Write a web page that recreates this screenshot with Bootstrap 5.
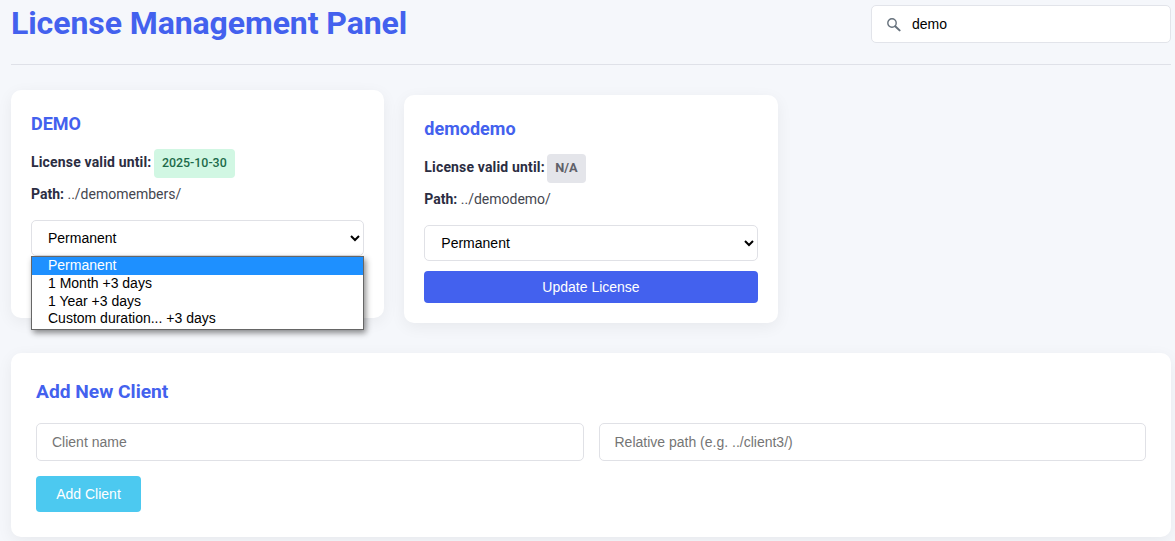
<!DOCTYPE html>
<html lang="en">
<head>
<meta charset="utf-8">
<title>License Management Panel</title>
<link rel="stylesheet" href="https://cdn.jsdelivr.net/npm/bootstrap@5.3.0/dist/css/bootstrap.min.css">
<style>
body{background:#f5f7fb;font-family:Roboto,sans-serif;color:#2b2d42;padding:0 4px 0 11px;overflow:hidden;height:541px}
.top-bar{height:43px;margin-bottom:21px}
.page-title{color:#4361ee;font-size:32px;font-weight:700;line-height:38px;margin:4px 0 0;letter-spacing:-.08px}
.search-box{width:300px;height:38px;margin-top:5px;background:#fff;border:1px solid #e2e4ea;border-radius:5px;padding-left:14px;gap:11px}
.search-box svg{flex:none}
.search-input{border:0;outline:0;padding:0;width:240px;font:14px "Liberation Sans",sans-serif;color:#000;background:transparent}
.rule{height:1px;background:#dfe1e8;margin-bottom:30px}
.client-grid{display:grid;grid-template-columns:repeat(3,1fr);gap:20px;margin-bottom:30px}
.panel{background:#fff;border-radius:10px;box-shadow:0 4px 16px rgba(0,0,0,.06)}
.client-panel{padding:20px;height:228px}
.client-panel.lifted{transform:translateY(-5px)}
.client-name{color:#4361ee;font-size:18px;font-weight:700;line-height:22px;margin:3px 0 14px}
.info-line{font-size:14px;line-height:27px;height:29px;margin-bottom:8px;color:#2b2d42}
.info-line b{font-weight:700}
.valid-label{letter-spacing:.16px}
.path-line{line-height:16px;height:16px;margin:0 0 18px}
.path-line span{color:#44464f}
.stamp{display:inline-block;height:29px;line-height:27px;padding:0 8px 2px;border-radius:4px;font-size:12.4px;font-weight:500;margin-left:-1px}
.stamp-ok{background:#d1f7e3;color:#1d6b4a}
.stamp-na{background:#e4e5ea;color:#5f6068;font-size:12.8px;font-weight:700}
.native-select{height:36px;border:1px solid #e0e1e6;border-radius:5px;background:#fff;color:#000;font:14px "Liberation Sans",sans-serif;padding:0 0 0 12px;width:100%;display:block;margin-bottom:10px}
.btn-update{background:#4361ee;color:#fff;border:0;border-radius:4px;width:100%;height:32px;font:14px "Liberation Sans",sans-serif;padding:0}
.option-menu{position:absolute;left:20px;top:166px;width:333px;background:#fff;border:1px solid #666;padding-bottom:1px;box-shadow:2px 3px 6px rgba(0,0,0,.45);font:14px/17.75px "Liberation Sans",sans-serif;color:#000;z-index:5}
.option-menu div{padding-left:16px;height:17.75px}
.option-menu .picked{background:#1e90ff;color:#fff}
.add-panel{padding:26px 25px 25px;height:184px}
.add-title{color:#4361ee;font-size:19.2px;font-weight:700;line-height:26px;margin:0 0 18px}
.add-fields{display:grid;grid-template-columns:1fr 1fr;gap:15px;margin-bottom:15px}
.add-field{height:38px;border:1px solid #e0e1e6;border-radius:5px;padding:0 15px;font:14px "Liberation Sans",sans-serif;outline:0;width:100%}
.add-field::placeholder{color:#757575;opacity:1}
.btn-add{background:#4cc9f0;color:#fff;border:0;border-radius:4px;width:105px;height:36px;font:14px "Liberation Sans",sans-serif;padding:0}
</style>
</head>
<body>
<div class="top-bar d-flex justify-content-between align-items-start">
  <h1 class="page-title">License Management Panel</h1>
  <div class="search-box d-flex align-items-center">
    <svg width="15" height="15" viewBox="0 0 15 15" aria-hidden="true"><circle cx="6" cy="6" r="4.2" fill="none" stroke="#66717c" stroke-width="1.4"/><path d="M9.2 9.2 13.6 13.4" stroke="#66717c" stroke-width="2" stroke-linecap="round"/></svg>
    <input class="search-input" type="text" value="demo" aria-label="Search">
  </div>
</div>
<div class="rule"></div>
<div class="client-grid">
  <div class="panel client-panel lifted position-relative">
    <h3 class="client-name">DEMO</h3>
    <div class="info-line"><b class="valid-label">License valid until:</b> <span class="stamp stamp-ok">2025-10-30</span></div>
    <p class="info-line path-line"><b>Path:</b> <span>../demomembers/</span></p>
    <select class="native-select" aria-label="Duration"><option>Permanent</option></select>
    <div class="option-menu">
      <div class="picked">Permanent</div>
      <div>1 Month +3 days</div>
      <div>1 Year +3 days</div>
      <div>Custom duration... +3 days</div>
    </div>
  </div>
  <div class="panel client-panel">
    <h3 class="client-name">demodemo</h3>
    <div class="info-line"><b class="valid-label">License valid until:</b> <span class="stamp stamp-na">N/A</span></div>
    <p class="info-line path-line"><b>Path:</b> <span>../demodemo/</span></p>
    <select class="native-select" aria-label="Duration"><option>Permanent</option></select>
    <button class="btn-update" type="button">Update License</button>
  </div>
</div>
<div class="panel add-panel">
  <h2 class="add-title">Add New Client</h2>
  <div class="add-fields">
    <input class="add-field" type="text" placeholder="Client name">
    <input class="add-field" type="text" placeholder="Relative path (e.g. ../client3/)">
  </div>
  <button class="btn-add" type="button">Add Client</button>
</div>
<script src="https://cdn.jsdelivr.net/npm/bootstrap@5.3.0/dist/js/bootstrap.bundle.min.js"></script>
</body>
</html>
